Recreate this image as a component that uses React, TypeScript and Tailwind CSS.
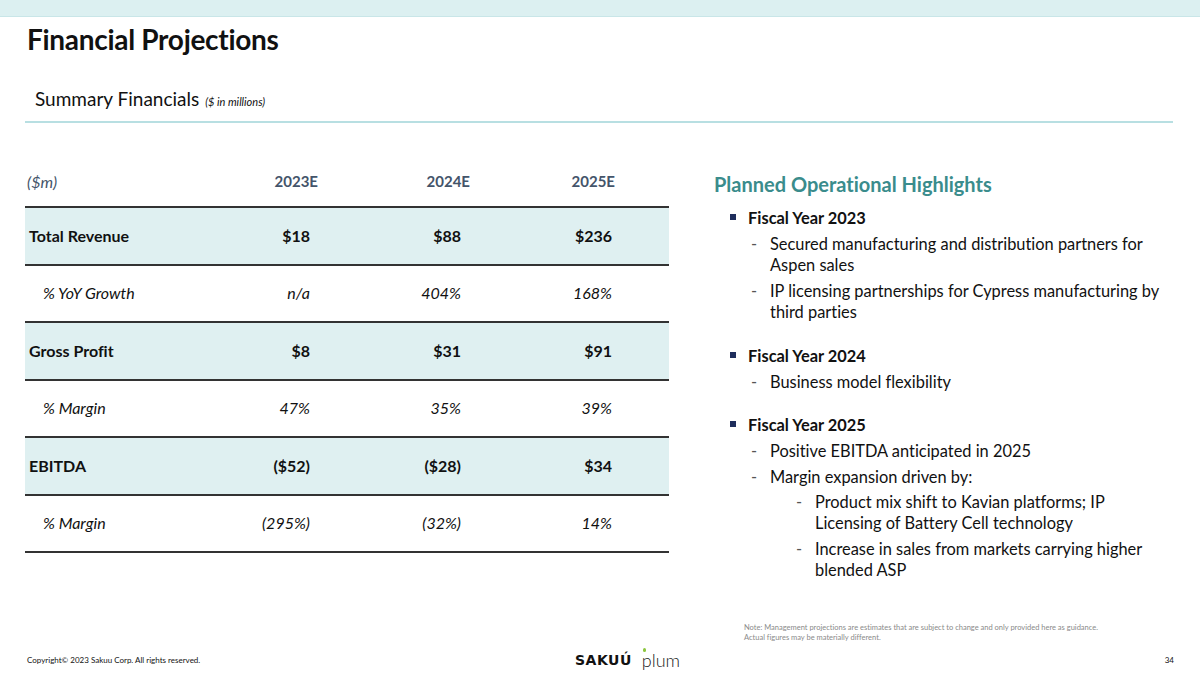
const rows = [
  { label: "Total Revenue", values: ["$18", "$88", "$236"], kind: "main" },
  { label: "% YoY Growth", values: ["n/a", "404%", "168%"], kind: "sub" },
  { label: "Gross Profit", values: ["$8", "$31", "$91"], kind: "main" },
  { label: "% Margin", values: ["47%", "35%", "39%"], kind: "sub" },
  { label: "EBITDA", values: ["($52)", "($28)", "$34"], kind: "main" },
  { label: "% Margin", values: ["(295%)", "(32%)", "14%"], kind: "sub" },
];

function Square() {
  return <span className="mt-[7px] h-[6px] w-[6px] shrink-0 bg-[#1f2d5c]" />;
}

function Dash({ children }: { children: React.ReactNode }) {
  return (
    <div className="flex">
      <span className="w-[20px] shrink-0 pl-[1px] text-[#555]">-</span>
      <div>{children}</div>
    </div>
  );
}

export default function App() {
  return (
    <div
      className="relative flex h-[675px] w-[1200px] flex-col overflow-hidden bg-white text-[#111] [font-variant-ligatures:none]"
      style={{ fontFamily: "Lato, 'Open Sans', sans-serif" }}
    >
      <div className="h-[17px] shrink-0 border-b border-[#c9e6e8] bg-[#dcf0f1]" />

      <h1 className="ml-[27px] mt-[4px] text-[28px] font-bold leading-[36px] tracking-[-0.3px]">
        Financial Projections
      </h1>

      <div className="ml-[35px] mt-[30px] flex items-baseline gap-[6px]">
        <span className="text-[19px] leading-[24px]">Summary Financials</span>
        <span className="text-[11px] italic">($ in millions)</span>
      </div>

      <div className="mx-[25px] mt-[10px] h-[2px] w-[1148px] bg-[#b8dfe2]" />

      <div className="ml-[25px] mt-[38px] flex">
        {/* table */}
        <div className="w-[644px]">
          <div className="flex h-[47px] items-center border-b-2 border-[#333] pb-[4px] text-[15px] font-bold text-[#44546a]">
            <div className="w-[193px] pl-[2px] text-[16px] font-normal italic">($m)</div>
            <div className="w-[100px] text-right">2023E</div>
            <div className="w-[152px] text-right">2024E</div>
            <div className="w-[145px] text-right">2025E</div>
          </div>
          {rows.map((r, i) => (
            <div
              key={i}
              className={
                "flex h-[57.5px] items-center border-b-2 border-[#333] text-[16px] " +
                (r.kind === "main" ? "bg-[#dff0f1] font-bold" : "bg-white italic")
              }
            >
              <div className={r.kind === "main" ? "w-[185px] pl-[4px]" : "w-[185px] pl-[18px]"}>
                {r.label}
              </div>
              <div className="w-[100px] text-right">{r.values[0]}</div>
              <div className="w-[151px] text-right">{r.values[1]}</div>
              <div className="w-[151px] text-right">{r.values[2]}</div>
            </div>
          ))}
        </div>

        {/* highlights */}
        <div className="ml-[45px] w-[450px] text-[16.4px] leading-[21px]">
          <h2 className="mt-[10px] text-[20px] font-bold leading-[26px] text-[#3a8c8c]">
            Planned Operational Highlights
          </h2>

          <div className="ml-[16px] mt-[10px] flex gap-[12px] font-bold">
            <Square />
            <span>Fiscal Year 2023</span>
          </div>
          <div className="ml-[36px] mt-[5px] flex flex-col gap-[5px]">
            <Dash>
              Secured manufacturing and distribution partners for
              <br />
              Aspen sales
            </Dash>
            <Dash>
              IP licensing partnerships for Cypress manufacturing by
              <br />
              third parties
            </Dash>
          </div>

          <div className="ml-[16px] mt-[23px] flex gap-[12px] font-bold">
            <Square />
            <span>Fiscal Year 2024</span>
          </div>
          <div className="ml-[36px] mt-[5px]">
            <Dash>Business model flexibility</Dash>
          </div>

          <div className="ml-[16px] mt-[22px] flex gap-[12px] font-bold">
            <Square />
            <span>Fiscal Year 2025</span>
          </div>
          <div className="ml-[36px] mt-[5px] flex flex-col gap-[5px]">
            <Dash>Positive EBITDA anticipated in 2025</Dash>
            <Dash>Margin expansion driven by:</Dash>
          </div>
          <div className="ml-[81px] mt-[4px] flex flex-col gap-[5px]">
            <Dash>
              Product mix shift to Kavian platforms; IP
              <br />
              Licensing of Battery Cell technology
            </Dash>
            <Dash>
              Increase in sales from markets carrying higher
              <br />
              blended ASP
            </Dash>
          </div>
        </div>
      </div>

      <div className="ml-[744px] mt-auto mb-[7px] text-[7.5px] leading-[10px] text-[#8a8a8a]">
        Note: Management projections are estimates that are subject to change and only provided here as guidance.
        <br />
        Actual figures may be materially different.
      </div>

      <div className="mb-[5px] flex h-[20px] items-center pl-[27px] pr-[26px] text-[8px]">
        <span className="w-[548px]">Copyright© 2023 Sakuu Corp. All rights reserved.</span>
        <div className="flex items-center gap-[10px]">
          <span
            className="text-[14px] font-extrabold tracking-[0.5px] text-[#111]"
            style={{ fontFamily: "'DejaVu Sans', sans-serif" }}
          >
            SAKUÚ
          </span>
          <span className="relative text-[18px] font-light leading-[18px] text-[#222]">
            plum
            <span className="absolute left-[1px] top-[-3px] h-[4px] w-[3px] rounded-full bg-[#8dc63f]" />
          </span>
        </div>
        <span className="ml-auto text-[8px]">34</span>
      </div>
    </div>
  );
}
